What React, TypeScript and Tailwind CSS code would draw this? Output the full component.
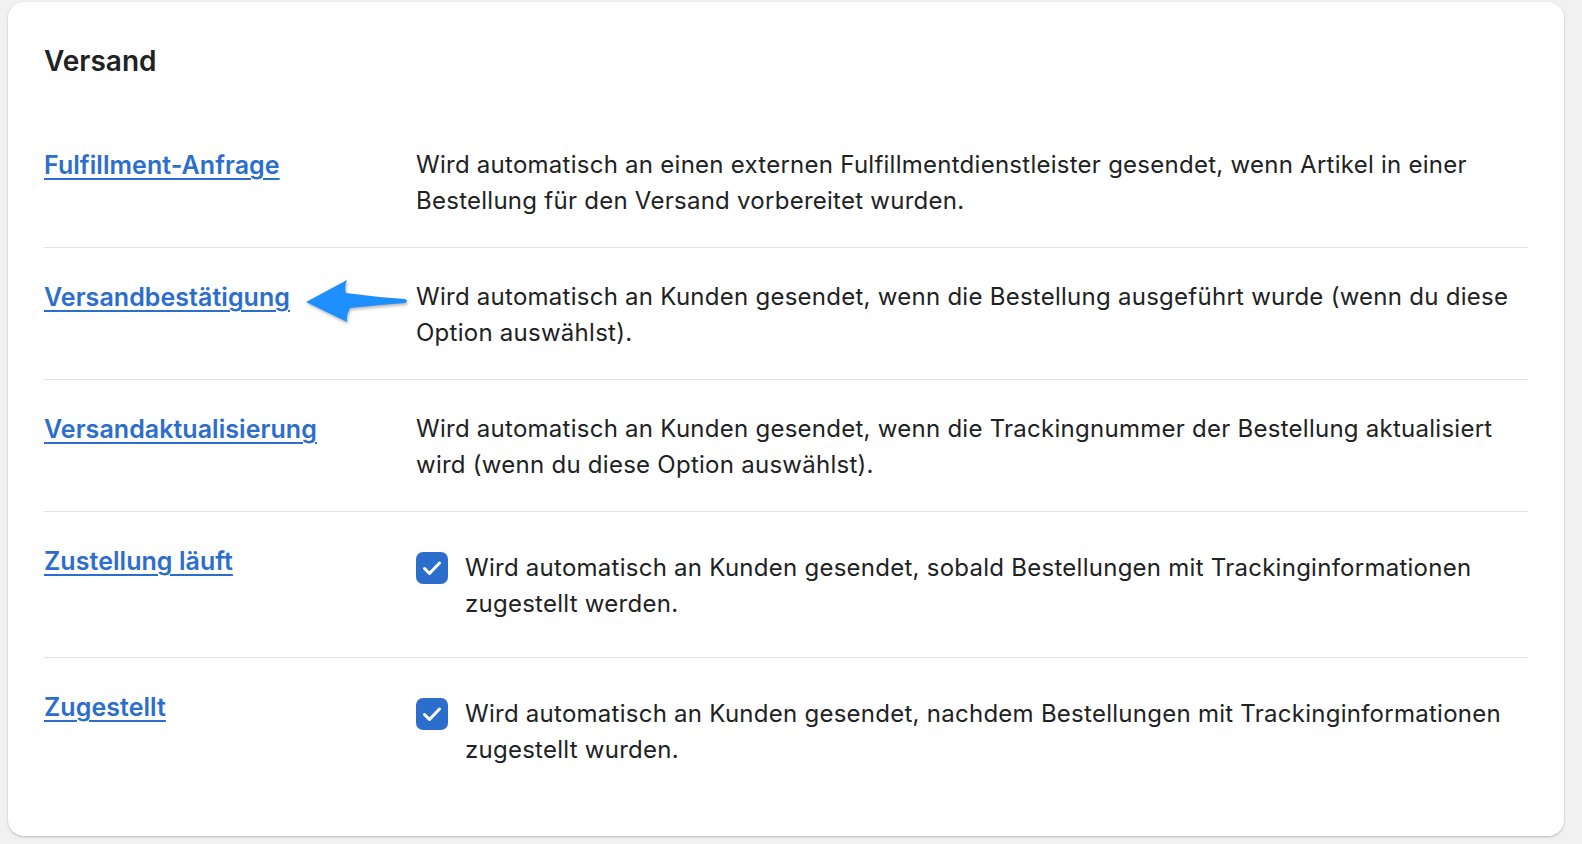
import React from "react";

const rows = [
  {
    title: "Fulfillment-Anfrage",
    text: "Wird automatisch an einen externen Fulfillmentdienstleister gesendet, wenn Artikel in einer Bestellung für den Versand vorbereitet wurden.",
    check: false,
  },
  {
    title: "Versandbestätigung",
    text: "Wird automatisch an Kunden gesendet, wenn die Bestellung ausgeführt wurde (wenn du diese Option auswählst).",
    check: false,
    arrow: true,
  },
  {
    title: "Versandaktualisierung",
    text: "Wird automatisch an Kunden gesendet, wenn die Trackingnummer der Bestellung aktualisiert wird (wenn du diese Option auswählst).",
    check: false,
  },
  {
    title: "Zustellung läuft",
    text: "Wird automatisch an Kunden gesendet, sobald Bestellungen mit Trackinginformationen zugestellt werden.",
    check: true,
  },
  {
    title: "Zugestellt",
    text: "Wird automatisch an Kunden gesendet, nachdem Bestellungen mit Trackinginformationen zugestellt wurden.",
    check: true,
  },
];

function Arrow() {
  return (
    <svg
      className="absolute left-[-116px] top-[-9px]"
      width="115"
      height="60"
      viewBox="0 0 115 60"
      style={{ filter: "drop-shadow(1px 2px 1.5px rgba(0,0,0,0.28))" }}
    >
      <path
        d="M6 32 L47 10 Q44 17 46 23 Q75 27 105 29 Q109 31 105 33 Q78 35 50 38 Q46 45 47 52 Z"
        fill="#1e8fff"
      />
    </svg>
  );
}

function Check() {
  return (
    <div className="mt-[2px] flex h-[32px] w-[32px] shrink-0 items-center justify-center rounded-[7px] bg-[#2c6ecb]">
      <svg width="32" height="32" viewBox="0 0 32 32" fill="none">
        <path d="M8.5 16.5 L13.5 21.5 L23.5 11" stroke="white" strokeWidth="3" strokeLinecap="round" strokeLinejoin="round" />
      </svg>
    </div>
  );
}

export default function App() {
  return (
    <div className="min-h-[844px] w-full bg-[#f1f1f1] pt-[2px] pl-[8px] pr-[18px] font-['Inter','Noto_Sans',sans-serif] text-[#202223]">
      <div className="h-[834px] w-[1556px] rounded-[16px] bg-white px-[36px] shadow-[0_1px_2px_rgba(0,0,0,0.18),0_1px_4px_rgba(0,0,0,0.06)]">
        <h2 className="pt-[41px] pb-[37px] text-[28px] font-semibold leading-[36px] text-[#202223]">Versand</h2>
        <div>
          {rows.map((r, i) => (
            <div
              key={r.title}
              className={`flex ${i < rows.length - 1 ? "border-b border-[#e1e3e5]" : ""} ${r.check ? "pt-[31px] pb-[35px]" : "pt-[31px] pb-[28px]"}`}
            >
              <div className="w-[372px] shrink-0">
                <a
                  href="#"
                  className="text-[25px] font-semibold leading-[36px] tracking-[0.05px] text-[#2c6ecb] underline decoration-[2px] underline-offset-[4px]"
                >
                  {r.title}
                </a>
              </div>
              <div className={`relative flex flex-1 gap-[17px] ${r.check ? "pt-[7px]" : ""}`}>
                {r.arrow && <Arrow />}
                {r.check && <Check />}
                <p className="text-[24px] leading-[36px] tracking-[0.26px] text-[#202223]">{r.text}</p>
              </div>
            </div>
          ))}
        </div>
      </div>
    </div>
  );
}
